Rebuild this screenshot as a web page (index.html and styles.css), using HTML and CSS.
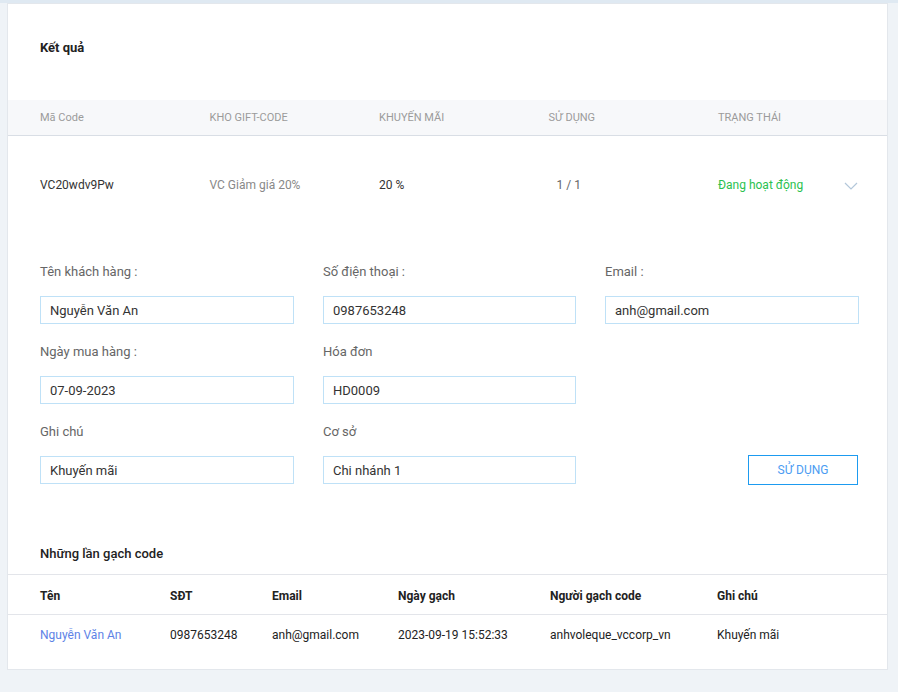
FILE: index.html
```html
<!DOCTYPE html>
<html lang="vi">
<head>
    <meta charset="UTF-8">
    <meta name="viewport" content="width=device-width, initial-scale=1.0">
    <title>Kết quả</title>
    <link rel="stylesheet" href="styles.css">
</head>
<body>

    <div class="card">

        <!-- tieu de -->
        <h3 class="title">Kết quả</h3>

        <!-- bang ket qua -->
        <div class="resultHead">
            <div>Mã Code</div>
            <div>KHO GIFT-CODE</div>
            <div>KHUYẾN MÃI</div>
            <div>SỬ DỤNG</div>
            <div>TRẠNG THÁI</div>
        </div>
        <div class="resultRow">
            <div>VC20wdv9Pw</div>
            <div class="muted">VC Giảm giá 20%</div>
            <div>20 %</div>
            <div class="used">1 / 1</div>
            <div class="status">
                <span class="active">Đang hoạt động</span>
                <svg class="chevron" width="14" height="8" viewBox="0 0 14 8">
                    <path d="M1 1 L7 7 L13 1" fill="none" stroke="#b3c7da" stroke-width="1.2"/>
                </svg>
            </div>
        </div>

        <!-- form thong tin -->
        <div class="form">
            <div class="field">
                <label>Tên khách hàng :</label>
                <input type="text" value="Nguyễn Văn An">
            </div>
            <div class="field">
                <label>Số điện thoại :</label>
                <input type="text" value="0987653248">
            </div>
            <div class="field">
                <label>Email :</label>
                <input type="text" value="anh@gmail.com">
            </div>

            <div class="field">
                <label>Ngày mua hàng :</label>
                <input type="text" value="07-09-2023">
            </div>
            <div class="field">
                <label>Hóa đơn</label>
                <input type="text" value="HD0009">
            </div>
            <div class="field"></div>

            <div class="field">
                <label>Ghi chú</label>
                <input type="text" value="Khuyến mãi">
            </div>
            <div class="field">
                <label>Cơ sở</label>
                <input type="text" value="Chi nhánh 1">
            </div>
            <div class="field btnCell">
                <button class="useBtn">SỬ DỤNG</button>
            </div>
        </div>

        <!-- lich su gach code -->
        <h4 class="subTitle">Những lần gạch code</h4>
        <div class="history">
            <div class="hRow hHead">
                <div>Tên</div>
                <div>SĐT</div>
                <div>Email</div>
                <div>Ngày gạch</div>
                <div>Người gạch code</div>
                <div>Ghi chú</div>
            </div>
            <div class="hRow">
                <div class="link">Nguyễn Văn An</div>
                <div>0987653248</div>
                <div>anh@gmail.com</div>
                <div>2023-09-19 15:52:33</div>
                <div>anhvoleque_vccorp_vn</div>
                <div>Khuyến mãi</div>
            </div>
        </div>

    </div>

</body>
</html>
```

FILE: styles.css
```css
body{
    margin: 0;
    padding: 3px 10px 0 7px;
    background-color: #eff3f7;
    font-family: Roboto, "Liberation Sans", Arial, sans-serif;
    color: #333;
    box-shadow: inset 0 3px 0 #dfe9f2;
}

.card{
    background-color: #fff;
    border: 1px solid #e3e7ec;
    padding-bottom: 15px;
}

.title{
    margin: 0;
    padding: 36px 32px 44px;
    font-size: 13px;
    line-height: 16px;
    font-weight: 700;
    color: #222;
}

/* bang ket qua */
.resultHead,
.resultRow{
    display: grid;
    grid-template-columns: repeat(5, 169.5px);
    padding-left: 32px;
}

.resultHead{
    height: 35px;
    align-items: center;
    background-color: #f7f8fa;
    border-bottom: 1px solid #d9dee5;
    font-size: 11px;
    color: #9b9b9b;
}

.resultRow{
    padding-top: 41px;
    padding-bottom: 40px;
    font-size: 12px;
    line-height: 16px;
    color: #333;
}

.muted{
    color: #888;
}

.used{
    padding-left: 8px;
    color: #666;
}

.status{
    display: flex;
    justify-content: space-between;
    align-items: center;
    padding-right: 30px;
}

.active{
    color: #2bc14f;
}

.chevron{
    margin-top: 2px;
}

/* form */
.form{
    display: grid;
    grid-template-columns: 254px 253px 254px;
    column-gap: 29px;
    padding: 31px 0 0 32px;
}

.field{
    height: 80px;
}

.field label{
    display: block;
    font-size: 13px;
    line-height: 16px;
    color: #666;
    margin-bottom: 16px;
}

.field input{
    display: block;
    box-sizing: border-box;
    width: 100%;
    height: 28px;
    margin: 0;
    padding: 0 9px;
    border: 1px solid #bfe1f7;
    border-radius: 0;
    outline: none;
    font-family: inherit;
    font-size: 13px;
    color: #333;
}

.btnCell{
    display: flex;
    justify-content: flex-end;
    align-items: flex-start;
    padding-top: 31px;
    box-sizing: border-box;
    padding-right: 1px;
}

.useBtn{
    width: 110px;
    height: 30px;
    background: #fff;
    border: 1px solid #1d9bf0;
    color: #4b9cf2;
    font-family: inherit;
    font-size: 12px;
    cursor: pointer;
}

/* lich su */
.subTitle{
    margin: 0;
    padding: 42px 32px 12px;
    font-size: 13px;
    line-height: 16px;
    font-weight: 500;
    color: #222;
}

.history{
    border-top: 1px solid #e3e5ea;
}

.hRow{
    display: grid;
    grid-template-columns: 130px 102px 126px 152px 167px 1fr;
    padding-left: 32px;
    font-size: 12px;
    line-height: 16px;
    color: #222;
}

.hHead{
    padding-top: 13px;
    padding-bottom: 10px;
    border-bottom: 1px solid #e3e5ea;
    font-weight: 700;
}

.hRow + .hRow{
    padding-top: 12px;
    padding-bottom: 11px;
}

.link{
    color: #5d82e6;
}
```
